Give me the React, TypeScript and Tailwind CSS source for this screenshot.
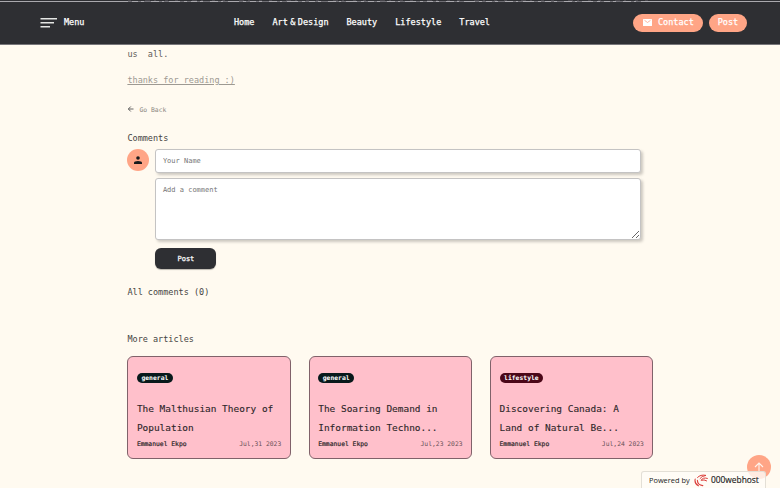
import React from 'react';

const links = [
  { label: 'Home', box: 'ml-[149px]' },
  { label: 'Art & Design', box: 'ml-[18px] [word-spacing:-2.7px]' },
  { label: 'Beauty', box: 'ml-[18px]' },
  { label: 'Lifestyle', box: 'ml-[18px]' },
  { label: 'Travel', box: 'ml-[18px]' },
];

const articles = [
  { tag: 'general', tone: 'bg-[#08191b]', lines: ['The Malthusian Theory of', 'Population'], date: 'Jul,31 2023' },
  { tag: 'general', tone: 'bg-[#08191b]', lines: ['The Soaring Demand in', 'Information Techno...'], date: 'Jul,23 2023' },
  { tag: 'lifestyle', tone: 'bg-[#4b0718]', lines: ['Discovering Canada: A', 'Land of Natural Be...'], date: 'Jul,24 2023' },
];

function Header() {
  return (
    <header className="h-[45px] shrink-0 overflow-hidden border-b border-[#77767a] bg-[#2e2f33] text-white">
      <svg className="block h-[2px] w-full" viewBox="0 0 780 2" fill="none">
        <path d="M0 1.5H780" stroke="#aaa9ae" />
        <path d="M128 1.5H651" stroke="#706f75" strokeDasharray="4 6 3 3 7 8 3 2 5 11 4 3" />
        <path d="M128 .5H651" stroke="#46454b" strokeDasharray="3 14 5 4 2 9 3 7" />
      </svg>
      <nav className="flex h-[41px] items-center pl-[40px] text-[8.5px] font-medium leading-[12px] [-webkit-text-stroke:0.25px_white]">
        <svg className="h-[10px] w-[17px]" viewBox="0 0 17 10" fill="none" stroke="#e4e6e4" strokeWidth="1.4">
          <path d="M.5 .8H17M.5 4.8H14M.5 8.7H10" />
        </svg>
        <span className="-mt-[1px] ml-[7px] w-[21px]">Menu</span>
        {links.map((l) => (
          <a key={l.label} className={`-mt-[1px] whitespace-nowrap ${l.box}`}>{l.label}</a>
        ))}
        <button className="ml-auto flex h-[18px] w-[70px] items-center rounded-full bg-[#ffa586] pl-[10px]">
          <svg className="mr-[6px] h-[7px] w-[9px]" viewBox="0 0 9 7">
            <rect width="9" height="7" rx=".6" fill="white" />
            <path d="M1.5 1.3 4.5 3.5 7.5 1.3" fill="none" stroke="#ffa586" strokeWidth=".8" />
          </svg>
          <span className="-mt-[1px]">Contact</span>
        </button>
        <button className="ml-[6px] mr-[33px] h-[18px] w-[38px] rounded-full bg-[#ffa586] pb-[1px]">Post</button>
      </nav>
    </header>
  );
}

function CommentForm() {
  return (
    <div className="mt-[5px] flex">
      <div className="flex h-[22px] w-[22px] items-center justify-center rounded-full bg-[#ffa586]">
        <svg className="h-[8px] w-[8px]" viewBox="0 0 8 8" fill="#17191b">
          <circle cx="4" cy="2" r="1.8" />
          <path d="M0 8V6.8Q0 5 4 5T8 6.8V8Z" />
        </svg>
      </div>
      <div className="ml-[6px] w-[486px] text-[7px]">
        <input
          placeholder="Your Name"
          className="block h-[24px] w-full rounded-[3px] border border-[#c4c3c3] bg-white px-[6.5px] shadow-[2px_2px_3px_#0003] placeholder:text-[#757575]"
        />
        <textarea
          placeholder="Add a comment"
          className="mt-[5px] block h-[62px] w-full rounded-[3px] border border-[#c4c3c3] bg-white px-[6.5px] py-[6px] leading-[10px] shadow-[2px_2px_3px_#0003] placeholder:text-[#757575]"
        />
        <button className="mt-[8px] block h-[21px] w-[61px] rounded-[6px] bg-[#2e2f33] font-medium text-white shadow-[0_1px_1px_#0004] [-webkit-text-stroke:0.25px_white]">
          Post
        </button>
      </div>
    </div>
  );
}

function Host() {
  return (
    <div className="absolute bottom-0 left-[641px] flex h-[17px] w-[125px] items-center rounded-t-[3px] border border-b-0 border-[#e3dfd6] bg-[#fffdf8]/80 pl-[7px] font-['Open_Sans',sans-serif] text-[7.4px] text-[#222]">
      <span className="w-[41px] whitespace-nowrap">Powered by</span>
      <svg className="ml-[4px] h-[13px] w-[14px]" viewBox="0 0 14 13" fill="none" stroke="#dc3e3a" strokeLinecap="round">
        <path d="M3.5 3.5Q6.5 .2 12 1.4Q7.5 2 6 4.5" strokeWidth="1" />
        <path d="M13.4 4.4Q8.6 3 7.2 6.4Q10 5.2 12.6 6.8" strokeWidth="1" />
        <path d="M1.2 5Q.2 9.4 4.4 11.8M3.4 6.4Q3.6 10.8 8.8 11.6" strokeWidth="1.1" />
      </svg>
      <span className="ml-[3px] text-[8.4px] [-webkit-text-stroke:0.15px_#222]">000webhost</span>
    </div>
  );
}

export default function App() {
  return (
    <div className="relative flex h-[488px] w-[780px] flex-col overflow-hidden bg-[#fffaf0] font-['DejaVu_Sans_Mono',monospace] text-[8.5px] leading-[12px] text-[#454442]">
      <Header />
      <main className="ml-[127.4px] w-[526px] pt-[3px]">
        <p className="whitespace-pre text-[#5e5c59]">us  all.</p>
        <p className="mt-[14px] text-[#9d9992] underline underline-offset-1">thanks for reading :)</p>
        <a className="mt-[18px] flex h-[12px] items-center text-[6.4px] text-[#8b8780]">
          <svg className="mr-[4px] mb-[3px] h-[6px] w-[8px]" viewBox="0 0 8 6" fill="none" stroke="#555" strokeWidth=".9">
            <path d="M6.5 3H1.5M3.8 .5 1.3 3 3.8 5.5" />
          </svg>
          Go Back
        </a>
        <h2 className="mt-[16px]">Comments</h2>
        <CommentForm />
        <h2 className="mt-[17px]">All comments (0)</h2>
        <h2 className="mt-[35px]">More articles</h2>
        <div className="mt-[11px] grid grid-cols-3 gap-[18px]">
          {articles.map((a) => (
            <article key={a.date} className="h-[103px] rounded-[6px] border border-[#80626a] bg-[#ffc0cb] px-[8.5px] pt-[16px] text-[#2d2629]">
              <span className={`flex h-[10px] w-fit items-center rounded-full px-[4.5px] text-[6.4px] font-bold text-white ${a.tone}`}>{a.tag}</span>
              <h3 className="mt-[16px] whitespace-nowrap text-[9.45px] leading-[19px] [-webkit-text-stroke:0.12px_#2d2629]">
                {a.lines[0]}<br />{a.lines[1]}
              </h3>
              <div className="mt-[2px] flex justify-between text-[6.35px] leading-[10px]">
                <span className="[-webkit-text-stroke:0.2px_#2d2629]">Emmanuel Ekpo</span>
                <span className="text-[#685057]">{a.date}</span>
              </div>
            </article>
          ))}
        </div>
      </main>
      <button className="absolute left-[747px] top-[455px] flex h-[24px] w-[24px] items-center justify-center rounded-full bg-[#ffa586]">
        <svg className="h-[10px] w-[10px]" viewBox="0 0 10 10" fill="none" stroke="#fff3ec" strokeWidth="1.1">
          <path d="M5 9.5V1M1 5 5 1 9 5" />
        </svg>
      </button>
      <Host />
    </div>
  );
}
